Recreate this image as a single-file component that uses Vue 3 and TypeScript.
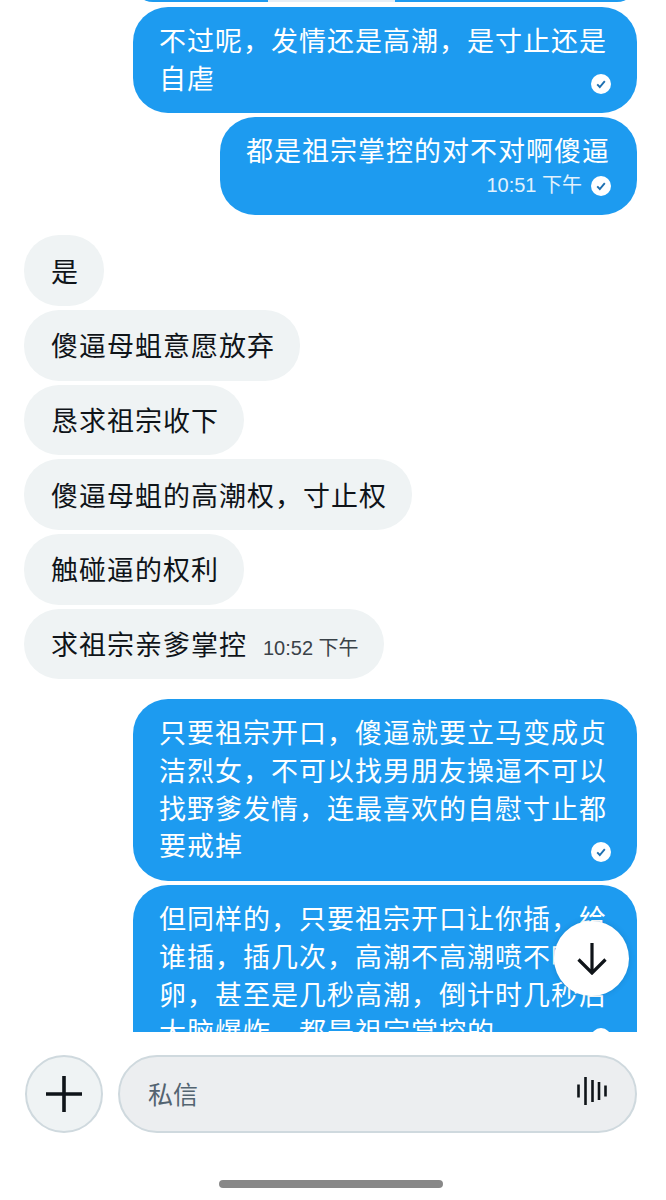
<template>
  <div class="page">
    <div class="messages">
      <div class="bubble mine sliver"></div>

      <div
        v-for="(m, i) in chat"
        :key="i"
        :class="['bubble', m.mine ? 'mine' : 'theirs', m.gapTop ? 'gap-top' : '']"
      >
        <span class="text">{{ m.text }}</span>
        <span v-if="!m.mine && m.time" class="time inline">{{ m.time }}</span>
        <div v-if="m.mine" :class="['meta', m.time ? '' : 'overlap']">
          <span v-if="m.time" class="time">{{ m.time }}</span>
          <svg class="check" viewBox="0 0 20 20" width="20" height="20">
            <circle cx="10" cy="10" r="10" fill="#fff" />
            <path d="M6.2 10.4l2.6 2.6 5-5.8" fill="none" stroke="#1d6fb0" stroke-width="1.9" />
          </svg>
        </div>
      </div>

      <button class="to-bottom">
        <svg viewBox="0 0 32 32" width="32" height="32">
          <path d="M16 0v30M2.500 16.500L16 30 29.500 16.500" fill="none" stroke="#0f1419" stroke-width="3.2" />
        </svg>
      </button>
    </div>

    <div class="composer">
      <button class="plus">
        <svg viewBox="0 0 36 36" width="36" height="36">
          <path d="M18 0v36M0 18h36" fill="none" stroke="#0f1419" stroke-width="3.6" />
        </svg>
      </button>
      <div class="input">
        <span class="placeholder">私信</span>
        <svg class="wave" viewBox="0 0 30 30" width="30" height="30">
          <path d="M1.500 8.500v13M8.500 1v28M15.500 4v22M22 6v18M28.500 9.500v11" fill="none" stroke="#0f1419" stroke-width="2.600" />
        </svg>
      </div>
    </div>

    <div class="home-bar"></div>
  </div>
</template>

<script setup lang="ts">
interface ChatItem {
  text: string
  mine: boolean
  time?: string
  gapTop?: boolean
}

const chat: ChatItem[] = [
  { text: '不过呢，发情还是高潮，是寸止还是自虐', mine: true },
  { text: '都是祖宗掌控的对不对啊傻逼', mine: true, time: '10:51 下午' },
  { text: '是', mine: false, gapTop: true },
  { text: '傻逼母蛆意愿放弃', mine: false },
  { text: '恳求祖宗收下', mine: false },
  { text: '傻逼母蛆的高潮权，寸止权', mine: false },
  { text: '触碰逼的权利', mine: false },
  { text: '求祖宗亲爹掌控', mine: false, time: '10:52 下午' },
  {
    text: '只要祖宗开口，傻逼就要立马变成贞洁烈女，不可以找男朋友操逼不可以找野爹发情，连最喜欢的自慰寸止都要戒掉',
    mine: true,
    gapTop: true,
  },
  {
    text: '但同样的，只要祖宗开口让你插，给谁插，插几次，高潮不高潮喷不喷卵，甚至是几秒高潮，倒计时几秒后大脑爆炸，都是祖宗掌控的',
    mine: true,
  },
]
</script>

<style>
html,
body {
  background: #fff;
}
</style>

<style scoped>
.page {
  width: 666px;
  height: 1200px;
  display: flex;
  flex-direction: column;
  overflow: hidden;
  font-family: "Liberation Sans", "Noto Sans CJK SC", sans-serif;
}

.messages {
  position: relative;
  height: 1032px;
  flex: none;
  overflow: hidden;
  display: flex;
  flex-direction: column;
  align-items: flex-start;
  gap: 4px;
  padding: 0 29px 0 24px;
  box-sizing: border-box;
}

.bubble {
  flex: none;
  box-sizing: border-box;
  max-width: 504px;
  border-radius: 35px;
  padding: 17px 27px 16px 26px;
  font-size: 27px;
  letter-spacing: 1px;
  line-height: 37.7px;
}

.mine {
  align-self: flex-end;
  background: #1d9bf0;
  color: #fff;
}

.theirs {
  background: #eff3f4;
  color: #0f1419;
  padding: 19.5px 25px 13.5px 27px;
}

.gap-top {
  margin-top: 16px;
}

.sliver {
  width: 504px;
  height: 40px;
  margin-top: -38px;
  margin-bottom: 1px;
  background: linear-gradient(
    to right,
    #1d9bf0 135px,
    #e6eef6 135px,
    #e6eef6 262px,
    #1d9bf0 262px
  );
}

.meta {
  display: flex;
  justify-content: flex-end;
  align-items: center;
  gap: 9px;
  height: 27px;
  margin-right: -1px;
}

.meta.overlap {
  margin-top: -26px;
  margin-bottom: 2px;
  height: 22px;
}

.check {
  display: block;
}

.time {
  font-size: 20px;
  letter-spacing: 0;
  line-height: 27px;
  color: #e2f2fd;
}

.time.inline {
  margin-left: 16px;
  color: #3a4248;
}

.to-bottom {
  position: absolute;
  left: 554px;
  top: 921px;
  width: 75px;
  height: 75px;
  padding: 0;
  border: none;
  border-radius: 50%;
  background: #fff;
  box-shadow: 0 0 6px rgba(0, 0, 0, 0.12);
  display: flex;
  align-items: center;
  justify-content: center;
}

.composer {
  flex: none;
  display: flex;
  gap: 15px;
  padding: 23px 29px 0 25px;
  box-sizing: border-box;
}

.plus {
  flex: none;
  width: 78px;
  height: 78px;
  padding: 0;
  border: 2px solid #cfd9de;
  border-radius: 50%;
  background: #eff3f4;
  display: flex;
  align-items: center;
  justify-content: center;
}

.input {
  flex: 1;
  height: 78px;
  box-sizing: border-box;
  border: 2px solid #cfd9de;
  border-radius: 39px;
  background: #eceef0;
  display: flex;
  align-items: center;
  justify-content: space-between;
  padding: 0 28px 3px 28px;
}

.wave {
  margin-top: -3px;
}

.placeholder {
  font-size: 25px;
  color: #536471;
}

.home-bar {
  flex: none;
  width: 224px;
  height: 8px;
  margin: 47px 0 0 219px;
  border-radius: 4px;
  background: #888;
}
</style>
